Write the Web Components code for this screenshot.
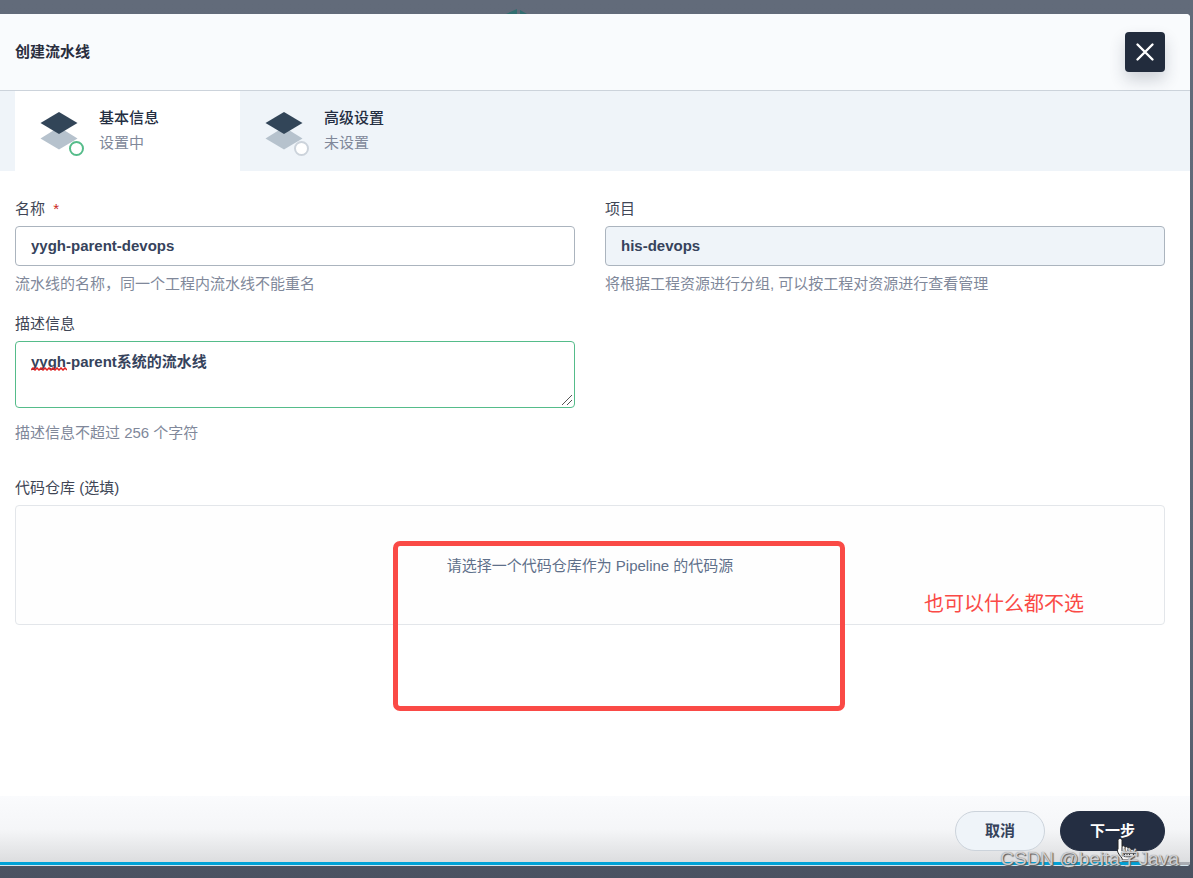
<!DOCTYPE html>
<html lang="zh-CN">
<head>
<meta charset="utf-8">
<meta name="viewport" content="width=device-width, initial-scale=1">
<title>创建流水线</title>
<style>
  body {
    margin: 0;
    font: 15px/20px "Liberation Sans", "Noto Sans CJK SC", sans-serif;
    color: #404656;
  }
</style>
</head>
<body>
<pipeline-page></pipeline-page>

<script>
class BaseElement extends HTMLElement {
  constructor() {
    super()
    this.attachShadow({mode: 'open'})
    this.template = document.createElement('template')
  }

  connectedCallback() {
    if (this.shadowRoot.childNodes.length) return
    this.template.innerHTML = this.render()
    this.shadowRoot.appendChild(this.template.content.cloneNode(true))
  }
}

class LayersIcon extends BaseElement {
  render() {
    const active = this.hasAttribute('active')
    return `
      <style>
        :host {
          display: block;
          width: 48px;
          height: 50px;
        }
        svg {
          display: block;
        }
      </style>
      <svg width="48" height="50" viewBox="0 0 48 50" aria-hidden="true">
        <path d="M1.5 31.5 20 20l18.500 11.500L20 42.500z" fill="#b6c2cd"/>
        <path d="M1.500 16 20 5l18.500 11L20 27z" fill="#324558"/>
        <circle cx="37.500" cy="41.500" r="6.500" fill="#fff" stroke="${active ? '#55bc8a' : '#ccd3db'}" stroke-width="2"/>
      </svg>
    `
  }
}
customElements.define('layers-icon', LayersIcon)

class StepTab extends BaseElement {
  render() {
    return `
      <style>
        :host {
          display: block;
          width: 225px;
        }
        button {
          display: flex;
          gap: 12px;
          width: 100%;
          height: 80px;
          padding: 16px 24px 14px;
          border: 0;
          background: transparent;
          font: inherit;
          text-align: left;
          color: #242e42;
        }
        :host([active]) button {
          background: #fff;
        }
        span {
          display: block;
        }
        .text {
          padding-top: 1px;
        }
        .name {
          margin-bottom: 5px;
          font-weight: 500;
        }
        .state {
          color: #80889a;
        }
      </style>
      <button type="button" role="tab" aria-selected="${this.hasAttribute('active')}">
        <layers-icon ${this.hasAttribute('active') ? 'active' : ''}></layers-icon>
        <span class="text">
          <span class="name"><slot></slot></span>
          <span class="state"><slot name="state"></slot></span>
        </span>
      </button>
    `
  }
}
customElements.define('step-tab', StepTab)

class FormField extends BaseElement {
  control() {
    const value = this.getAttribute('value')
    if (this.hasAttribute('multiline')) {
      return `
        <div class="area">
          <textarea id="control" spellcheck="false">${value}</textarea>
          <svg class="spelling" width="36" height="4" viewBox="0 0 36 4" aria-hidden="true">
            <path d="M0 3l2-2 2 2 2-2 2 2 2-2 2 2 2-2 2 2 2-2 2 2 2-2 2 2 2-2 2 2 2-2 2 2 2-2 2 2" fill="none" stroke="#e02020" stroke-width="1.500"/>
          </svg>
          <svg class="grip" width="12" height="12" viewBox="0 0 12 12" aria-hidden="true">
            <path d="M1 11L11 1M6 11l5-5" fill="none" stroke="#555"/>
          </svg>
        </div>
      `
    }
    return `<input id="control" type="text" value="${value}" ${this.hasAttribute('readonly') ? 'readonly' : ''}>`
  }

  render() {
    return `
      <style>
        :host {
          display: block;
        }
        label {
          display: block;
          margin-bottom: 7px;
        }
        .required {
          margin-left: 4px;
          color: #ca2621;
        }
        input, textarea {
          display: block;
          box-sizing: border-box;
          width: 100%;
          height: 40px;
          margin: 0;
          padding: 9px 15px;
          border: 1px solid #abb4be;
          border-radius: 4px;
          outline: 0;
          background: #fff;
          font: inherit;
          font-weight: 700;
          color: #36435c;
        }
        input {
          padding: 8px 15px 10px;
        }
        input[readonly] {
          background: #eff4f9;
        }
        textarea {
          height: 67px;
          padding-top: 10px;
          border-color: #55bc8a;
          resize: vertical;
        }
        textarea::-webkit-resizer {
          display: none;
        }
        .area {
          position: relative;
          padding-bottom: 7px;
        }
        .spelling {
          position: absolute;
          left: 16px;
          top: 26px;
        }
        .grip {
          position: absolute;
          right: 2px;
          bottom: 9px;
          pointer-events: none;
        }
        p {
          margin: 8px 0 0;
          color: #80889a;
        }
      </style>
      <label for="control"><slot></slot>${this.hasAttribute('required') ? ' <span class="required">*</span>' : ''}</label>
      ${this.control()}
      <p><slot name="help"></slot></p>
    `
  }
}
customElements.define('form-field', FormField)

class RepoPicker extends BaseElement {
  render() {
    return `
      <style>
        :host {
          display: block;
          position: relative;
        }
        button {
          display: block;
          width: 100%;
          height: 120px;
          padding: 2px 0 0;
          border: 1px solid #e3e6ea;
          border-radius: 4px;
          background: #fefefe;
          font: inherit;
          color: #5f708a;
        }
        .frame {
          position: absolute;
          left: 378px;
          top: 36px;
          box-sizing: border-box;
          width: 452px;
          height: 170px;
          border: 5px solid #fa4a46;
          border-radius: 7px;
          pointer-events: none;
        }
        .note {
          position: absolute;
          right: 81px;
          top: 85px;
          font-size: 20px;
          line-height: 28px;
          color: #fa4a46;
        }
      </style>
      <button type="button"><slot></slot></button>
      <div class="frame"></div>
      <div class="note"><slot name="note"></slot></div>
    `
  }
}
customElements.define('repo-picker', RepoPicker)

class RoundButton extends BaseElement {
  render() {
    return `
      <style>
        :host {
          display: block;
        }
        button {
          display: block;
          height: 40px;
          padding: 0 29px;
          border: 1px solid #ccd3db;
          border-radius: 20px;
          background: #eff4f9;
          font: inherit;
          font-weight: 700;
          color: #36435c;
        }
        :host([primary]) button {
          border-color: #242e42;
          background: #242e42;
          color: #fff;
        }
      </style>
      <button type="button"><slot></slot></button>
    `
  }
}
customElements.define('round-button', RoundButton)

class CloseButton extends BaseElement {
  render() {
    return `
      <style>
        :host {
          display: block;
        }
        button {
          display: grid;
          place-items: center;
          width: 40px;
          height: 40px;
          padding: 0;
          border: 0;
          border-radius: 4px;
          background: #222c3d;
          box-shadow: 0 8px 16px rgba(36, 46, 66, 0.2);
        }
      </style>
      <button type="button" aria-label="关闭">
        <svg width="20" height="20" viewBox="0 0 20 20" aria-hidden="true">
          <path d="M2.500 2.500l15 15M17.500 2.500l-15 15" fill="none" stroke="#fff" stroke-width="2.400" stroke-linecap="round"/>
        </svg>
      </button>
    `
  }
}
customElements.define('close-button', CloseButton)

class PipelineDialog extends BaseElement {
  render() {
    return `
      <style>
        :host {
          display: flex;
          flex-direction: column;
          overflow: hidden;
          border-radius: 0 4px 4px 0;
          background: #fff;
        }
        header {
          display: flex;
          align-items: center;
          justify-content: space-between;
          height: 76px;
          padding: 0 25px 0 15px;
          border-bottom: 1px solid #ccd3db;
          background: #f9fbfd;
        }
        h1 {
          margin: 0;
          font-size: 15px;
          font-weight: 700;
          line-height: 20px;
          color: #2a2e3e;
        }
        nav {
          display: flex;
          padding: 0 15px;
          background: #eff4f9;
        }
        main {
          flex: 1;
          padding: 28px 25px 30px 15px;
        }
        footer {
          display: flex;
          justify-content: flex-end;
          gap: 15px;
          padding: 15px 25px 11px;
          background: linear-gradient(#fafbfd, #f5f6f8 50%, #dcdddf);
        }
        .progress {
          height: 3px;
          border-bottom: 1px solid #d5e6ee;
          background: linear-gradient(90deg, #00a1d6 96%, #a9acb2 96%);
        }
      </style>
      <header>
        <h1><slot name="title"></slot></h1>
        <close-button></close-button>
      </header>
      <nav role="tablist"><slot name="tabs"></slot></nav>
      <main><slot></slot></main>
      <footer><slot name="actions"></slot></footer>
      <div class="progress"></div>
    `
  }
}
customElements.define('pipeline-dialog', PipelineDialog)

class PipelinePage extends BaseElement {
  render() {
    return `
      <style>
        :host {
          display: flex;
          flex-direction: column;
          position: relative;
          box-sizing: border-box;
          min-height: 100vh;
          padding: 14px 3px 12px 0;
          background: linear-gradient(#626b7a, #5c6574 80%, #4a5261);
          overflow: hidden;
        }
        pipeline-dialog {
          flex: 1;
        }
        .form {
          display: grid;
          grid-template-columns: 1fr 1fr;
          gap: 20px 30px;
          margin-bottom: 35px;
        }
        .label {
          margin-bottom: 7px;
        }
        .logo {
          position: absolute;
          left: 506px;
          top: 8px;
        }
        .cursor {
          position: absolute;
          right: 58px;
          bottom: 17px;
        }
        .watermark {
          position: absolute;
          right: 14px;
          bottom: 7px;
          font-size: 19px;
          line-height: 24px;
          color: rgba(225, 225, 228, 0.85);
          text-shadow: 1px 1px 1px #555, 0 0 1px #777;
        }
      </style>
      <svg class="logo" width="24" height="6" viewBox="0 0 24 6" aria-hidden="true">
        <path d="M0 6l11-5v5zM14 2l7 4h-7z" fill="#326e70"/>
      </svg>
      <pipeline-dialog>
        <span slot="title">创建流水线</span>
        <step-tab slot="tabs" active>基本信息<span slot="state">设置中</span></step-tab>
        <step-tab slot="tabs">高级设置<span slot="state">未设置</span></step-tab>
        <div class="form">
          <form-field value="yygh-parent-devops" required>名称<span slot="help">流水线的名称，同一个工程内流水线不能重名</span></form-field>
          <form-field value="his-devops" readonly>项目<span slot="help">将根据工程资源进行分组, 可以按工程对资源进行查看管理</span></form-field>
          <form-field value="yygh-parent系统的流水线" multiline>描述信息<span slot="help">描述信息不超过 256 个字符</span></form-field>
        </div>
        <div class="label">代码仓库 (选填)</div>
        <repo-picker>请选择一个代码仓库作为 Pipeline 的代码源<span slot="note">也可以什么都不选</span></repo-picker>
        <round-button slot="actions">取消</round-button>
        <round-button slot="actions" primary>下一步</round-button>
      </pipeline-dialog>
      <svg class="cursor" width="20" height="24" viewBox="0 0 20 24" aria-hidden="true">
        <path d="M5 1.500c1 0 2 .8 2 2v6c.5-1 3-1 3 .8.800-1 3-.8 3 .9.900-.8 3-.4 3 1.300.9-.5 2.500 0 2.500 1.500v3c0 3-2 3.500-2 6H7.500c0-2.500-3-4-4.500-7.500-1-2-.3-3.300 0-3.300V3.500c0-1.200 1-2 2-2z" fill="#fff" stroke="#222"/>
        <path d="M7 9.500V14M10 10.500V14M13 11.500V14M9.500 17v3M12 17v3M14.500 17v3" fill="none" stroke="#222"/>
      </svg>
      <div class="watermark">CSDN @beita学Java</div>
    `
  }
}
customElements.define('pipeline-page', PipelinePage)
</script>
</body>
</html>
